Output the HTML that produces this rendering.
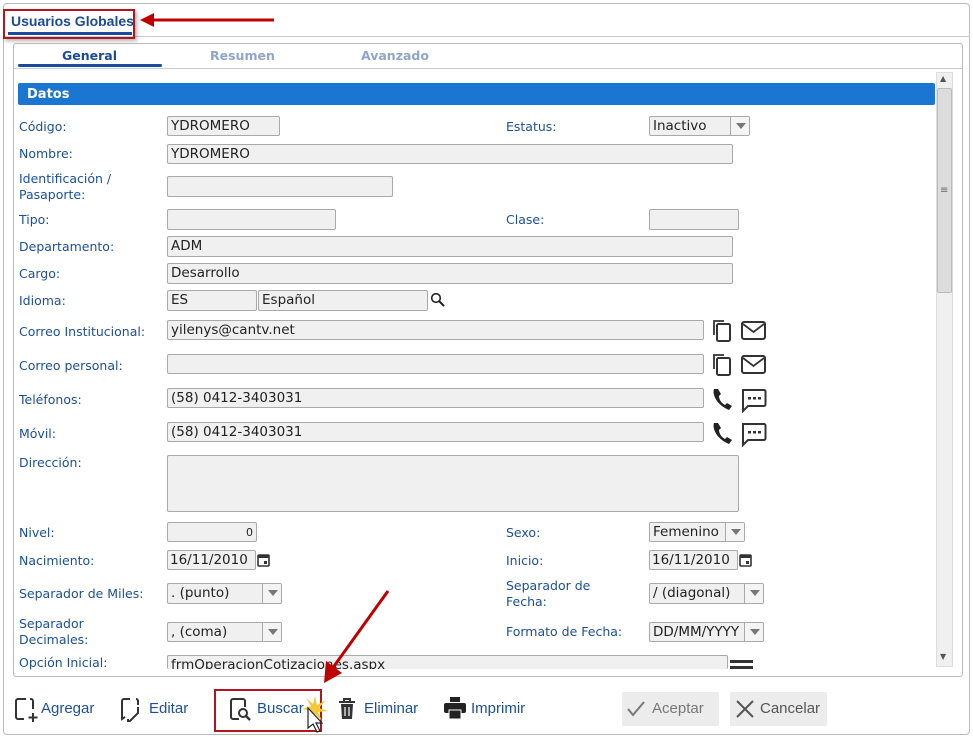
<!DOCTYPE html>
<html><head><meta charset="utf-8"><style>
*{box-sizing:border-box;margin:0;padding:0}
body{width:973px;height:737px;background:#fff;position:relative;overflow:hidden;font-family:"DejaVu Sans","Liberation Sans",sans-serif;font-size:12.5px;color:#1b4f9e}
.a{position:absolute}
.l{position:absolute;color:#1b4f9e;font-size:12.5px;line-height:16px;white-space:nowrap}
.i{position:absolute;background:#f0f0f0;border:1px solid #a9a9a9;border-radius:2px;color:#222;font-size:13.5px;line-height:19px;padding-left:3px;white-space:nowrap;overflow:hidden}
.s .dd{position:absolute;right:0;top:0;bottom:0;width:19px;border-left:1px solid #a9a9a9;background:#f4f4f4}
.s .dd:after{content:"";position:absolute;left:5px;top:6px;border-left:5px solid transparent;border-right:5px solid transparent;border-top:6px solid #777}
.b{position:absolute;font-size:15px;color:#1b4f9e;font-family:"Liberation Sans",sans-serif;line-height:18px}
</style></head><body>
<div class="a" style="left:3px;top:3px;width:967px;height:732px;border:1px solid #bbb;border-radius:4px"></div>
<div class="a" style="left:3px;top:36px;width:967px;height:1px;background:#ccc"></div>
<div class="a" style="left:11px;top:13px;font-weight:bold;font-size:14px;font-family:'Liberation Sans',sans-serif;color:#1a4a9c">Usuarios Globales</div>
<div class="a" style="left:8px;top:32px;width:124px;height:3px;background:#1a4a9c"></div>
<div class="a" style="left:3px;top:9px;width:132px;height:30px;border:2px solid #b01520;box-shadow:2px 2px 4px rgba(0,0,0,.3)"></div>
<svg class="a" style="left:138px;top:12px" width="140" height="18"><line x1="12" y1="8" x2="136" y2="8" stroke="#c00000" stroke-width="3"/><polygon points="2,8 16,1 16,15" fill="#c00000"/></svg>
<div class="a" style="left:13px;top:43px;width:950px;height:634px;border:1px solid #bbb;border-radius:3px"></div>
<div class="a" style="left:13px;top:68px;width:950px;height:1px;background:#ccc"></div>
<div class="a" style="left:62px;top:48px;font-weight:bold;font-size:12.5px;color:#1a4a9c">General</div>
<div class="a" style="left:210px;top:48px;font-weight:bold;font-size:12.5px;color:#8fa6cc">Resumen</div>
<div class="a" style="left:361px;top:48px;font-weight:bold;font-size:12.5px;color:#8fa6cc">Avanzado</div>
<div class="a" style="left:18px;top:64px;width:144px;height:3px;background:#1a4a9c;border-radius:2px"></div>
<div class="a" style="left:18px;top:83px;width:917px;height:22px;background:#1b76d1;border-radius:2px;color:#fff;font-weight:bold;font-size:13px;line-height:24px;padding-left:9px">Datos</div>
<div class="a" style="left:936px;top:72px;width:17px;height:595px;background:#f0f0f0;border:1px solid #ddd"></div>
<div class="a" style="left:937px;top:88px;width:15px;height:205px;background:#dcdcdc;border:1px solid #bbb;border-radius:2px"></div>
<div class="a" style="left:940px;top:186px;font-size:10px;color:#666;line-height:10px">≡</div>
<div class="a" style="left:940px;top:74px;font-size:8px;color:#555">▲</div>
<div class="a" style="left:940px;top:652px;font-size:8px;color:#555">▼</div>

<div class="l" style="left:19px;top:119px">Código:</div>
<div class="i" style="left:167px;top:116px;width:113px;height:20px">YDROMERO</div>
<div class="l" style="left:506px;top:119px">Estatus:</div>
<div class="i s" style="left:649px;top:116px;width:101px;height:20px">Inactivo<span class="dd"></span></div>
<div class="l" style="left:19px;top:146px">Nombre:</div>
<div class="i" style="left:167px;top:144px;width:566px;height:20px">YDROMERO</div>
<div class="l" style="left:19px;top:171px">Identificación /</div>
<div class="l" style="left:19px;top:187px">Pasaporte:</div>
<div class="i" style="left:167px;top:176px;width:226px;height:21px"></div>
<div class="l" style="left:19px;top:212px">Tipo:</div>
<div class="i" style="left:167px;top:209px;width:169px;height:21px"></div>
<div class="l" style="left:506px;top:212px">Clase:</div>
<div class="i" style="left:649px;top:209px;width:90px;height:21px"></div>
<div class="l" style="left:19px;top:239px">Departamento:</div>
<div class="i" style="left:167px;top:236px;width:566px;height:21px">ADM</div>
<div class="l" style="left:19px;top:266px">Cargo:</div>
<div class="i" style="left:167px;top:263px;width:566px;height:21px">Desarrollo</div>
<div class="l" style="left:19px;top:293px">Idioma:</div>
<div class="i" style="left:167px;top:290px;width:90px;height:21px">ES</div>
<div class="i" style="left:258px;top:290px;width:170px;height:21px">Español</div>
<svg class="a" style="left:430px;top:292px" width="16" height="16"><circle cx="6" cy="6" r="4.3" fill="none" stroke="#222" stroke-width="1.6"/><line x1="9" y1="9" x2="14" y2="14" stroke="#222" stroke-width="2"/></svg>
<div class="l" style="left:19px;top:324px">Correo Institucional:</div>
<div class="i" style="left:167px;top:320px;width:537px;height:20px">yilenys@cantv.net</div>
<div class="l" style="left:19px;top:358px">Correo personal:</div>
<div class="i" style="left:167px;top:354px;width:537px;height:20px"></div>
<div class="l" style="left:19px;top:392px">Teléfonos:</div>
<div class="i" style="left:167px;top:388px;width:537px;height:20px">(58) 0412-3403031</div>
<div class="l" style="left:19px;top:426px">Móvil:</div>
<div class="i" style="left:167px;top:422px;width:537px;height:20px">(58) 0412-3403031</div>
<svg class="a" style="left:711px;top:319px" width="60" height="24"><path d="M3 16V2h10" fill="none" stroke="#333" stroke-width="1.8"/><rect x="6" y="5" width="13" height="17" rx="1.5" fill="none" stroke="#333" stroke-width="2"/><rect x="31" y="3" width="23" height="17" rx="2" fill="none" stroke="#333" stroke-width="2"/><path d="M32 5l10.5 8L53 5" fill="none" stroke="#333" stroke-width="1.8"/></svg>
<svg class="a" style="left:711px;top:353px" width="60" height="24"><path d="M3 16V2h10" fill="none" stroke="#333" stroke-width="1.8"/><rect x="6" y="5" width="13" height="17" rx="1.5" fill="none" stroke="#333" stroke-width="2"/><rect x="31" y="3" width="23" height="17" rx="2" fill="none" stroke="#333" stroke-width="2"/><path d="M32 5l10.5 8L53 5" fill="none" stroke="#333" stroke-width="1.8"/></svg>
<svg class="a" style="left:711px;top:387px" width="60" height="26"><path d="M3 2c-2 6 3 16 15 21l3-4-5-3-2 2C10 16 8 12 8 9l2-2-3-5z" fill="#222"/><path d="M32 3h21a1.5 1.5 0 0 1 1.5 1.5v13a1.5 1.5 0 0 1-1.5 1.5H37l-5 5z" fill="none" stroke="#333" stroke-width="2"/><rect x="37" y="10" width="3" height="2.5" fill="#333"/><rect x="42" y="10" width="3" height="2.5" fill="#333"/><rect x="47" y="10" width="3" height="2.5" fill="#333"/></svg>
<svg class="a" style="left:711px;top:421px" width="60" height="26"><path d="M3 2c-2 6 3 16 15 21l3-4-5-3-2 2C10 16 8 12 8 9l2-2-3-5z" fill="#222"/><path d="M32 3h21a1.5 1.5 0 0 1 1.5 1.5v13a1.5 1.5 0 0 1-1.5 1.5H37l-5 5z" fill="none" stroke="#333" stroke-width="2"/><rect x="37" y="10" width="3" height="2.5" fill="#333"/><rect x="42" y="10" width="3" height="2.5" fill="#333"/><rect x="47" y="10" width="3" height="2.5" fill="#333"/></svg>
<div class="l" style="left:19px;top:455px">Dirección:</div>
<div class="i" style="left:167px;top:455px;width:572px;height:57px"></div>
<div class="l" style="left:19px;top:525px">Nivel:</div>
<div class="i" style="left:167px;top:522px;width:90px;height:20px;text-align:right;padding-right:3px;font-size:11px">0</div>
<div class="l" style="left:506px;top:525px">Sexo:</div>
<div class="i s" style="left:649px;top:522px;width:96px;height:20px">Femenino<span class="dd"></span></div>
<div class="l" style="left:19px;top:553px">Nacimiento:</div>
<div class="i" style="left:167px;top:550px;width:89px;height:20px;padding-left:2px">16/11/2010</div>
<svg class="a" style="left:257px;top:553px" width="14" height="14"><rect x="1" y="2" width="11" height="11" rx="1" fill="none" stroke="#333" stroke-width="1.6"/><rect x="1" y="2" width="11" height="3" fill="#333"/><rect x="7" y="8" width="3" height="3" fill="#333"/></svg>
<div class="l" style="left:506px;top:553px">Inicio:</div>
<div class="i" style="left:649px;top:550px;width:89px;height:20px;padding-left:2px">16/11/2010</div>
<svg class="a" style="left:739px;top:553px" width="14" height="14"><rect x="1" y="2" width="11" height="11" rx="1" fill="none" stroke="#333" stroke-width="1.6"/><rect x="1" y="2" width="11" height="3" fill="#333"/><rect x="7" y="8" width="3" height="3" fill="#333"/></svg>
<div class="l" style="left:19px;top:586px">Separador de Miles:</div>
<div class="i s" style="left:167px;top:583px;width:115px;height:21px">. (punto)<span class="dd"></span></div>
<div class="l" style="left:506px;top:578px">Separador de</div>
<div class="l" style="left:506px;top:594px">Fecha:</div>
<div class="i s" style="left:649px;top:583px;width:115px;height:21px">/ (diagonal)<span class="dd"></span></div>
<div class="l" style="left:19px;top:616px">Separador</div>
<div class="l" style="left:19px;top:632px">Decimales:</div>
<div class="i s" style="left:167px;top:622px;width:115px;height:20px">, (coma)<span class="dd"></span></div>
<div class="l" style="left:506px;top:624px">Formato de Fecha:</div>
<div class="i s" style="left:649px;top:622px;width:115px;height:20px">DD/MM/YYYY<span class="dd"></span></div>
<div class="l" style="left:19px;top:655px">Opción Inicial:</div>
<div class="i" style="left:167px;top:655px;width:561px;height:14px;border-bottom:none;line-height:19px">frmOperacionCotizaciones.aspx</div>
<div class="a" style="left:730px;top:660px;width:23px;height:3px;background:#333"></div>
<div class="a" style="left:730px;top:666px;width:23px;height:3px;background:#333"></div>
<svg class="a" style="left:310px;top:585px" width="90" height="105"><line x1="78" y1="6" x2="22" y2="84" stroke="#c00000" stroke-width="3"/><polygon points="14,98 16,76 32,88" fill="#c00000"/></svg>
<svg class="a" style="left:14px;top:697px" width="26" height="26"><path d="M12 2H4a2 2 0 0 0-2 2v16a2 2 0 0 0 2 2h6M16 2h1a2 2 0 0 1 2 2v8" fill="none" stroke="#333" stroke-width="2"/><path d="M19 16v9M14.5 20.5h9" stroke="#333" stroke-width="2"/></svg>
<div class="b" style="left:41px;top:700px">Agregar</div>
<svg class="a" style="left:120px;top:697px" width="26" height="26"><path d="M10 2H4a2 2 0 0 0-2 2v18l3-2M16 2a2 2 0 0 1 2 2v4" fill="none" stroke="#333" stroke-width="2"/><path d="M18 10v6l-8 8H8v-2" fill="none" stroke="#333" stroke-width="2"/></svg>
<div class="b" style="left:149px;top:700px">Editar</div>
<div class="a" style="left:214px;top:689px;width:108px;height:43px;border:2px solid #b01520"></div>
<svg class="a" style="left:229px;top:697px" width="26" height="26"><path d="M10 22H4a2 2 0 0 1-2-2V4a2 2 0 0 1 2-2h10a2 2 0 0 1 2 2v6" fill="none" stroke="#333" stroke-width="2"/><circle cx="14" cy="16" r="4" fill="none" stroke="#333" stroke-width="2"/><line x1="17" y1="19" x2="21" y2="23" stroke="#333" stroke-width="2.4"/></svg>
<div class="b" style="left:257px;top:700px">Buscar</div>
<svg class="a" style="left:300px;top:694px" width="30" height="42"><polygon points="15,2 17,11 26,6 19,14 28,17 18,18 22,27 15,20 9,26 12,17 2,15 11,12 6,4 13,10" fill="#f3c93a"/><path d="M8 14v20l5-4 4 8 3-1-4-8h6z" fill="#fff" stroke="#222" stroke-width="1.2"/></svg>
<svg class="a" style="left:337px;top:697px" width="22" height="26"><path d="M2 5h16M7 5V2h6v3" fill="none" stroke="#333" stroke-width="2"/><path d="M4 7h12l-1 15H5z" fill="#333"/><path d="M8 10v9M12 10v9" stroke="#fff" stroke-width="1.2"/></svg>
<div class="b" style="left:364px;top:700px">Eliminar</div>
<svg class="a" style="left:443px;top:696px" width="26" height="26"><rect x="7" y="1" width="10" height="5" fill="#222"/><rect x="1" y="7" width="22" height="10" rx="2" fill="#222"/><rect x="6" y="14" width="12" height="9" fill="#222" stroke="#fff" stroke-width="1"/></svg>
<div class="b" style="left:471px;top:700px">Imprimir</div>
<div class="a" style="left:622px;top:692px;width:97px;height:34px;background:#ececec;border-radius:2px"></div>
<svg class="a" style="left:626px;top:699px" width="20" height="20"><path d="M2 10l5 6L18 3" fill="none" stroke="#777" stroke-width="2"/></svg>
<div class="b" style="left:652px;top:700px;color:#777">Aceptar</div>
<div class="a" style="left:730px;top:692px;width:97px;height:34px;background:#ececec;border-radius:2px"></div>
<svg class="a" style="left:735px;top:699px" width="20" height="20"><path d="M2 2l16 16M18 2L2 18" fill="none" stroke="#555" stroke-width="2"/></svg>
<div class="b" style="left:760px;top:700px;color:#555">Cancelar</div>
</body></html>
